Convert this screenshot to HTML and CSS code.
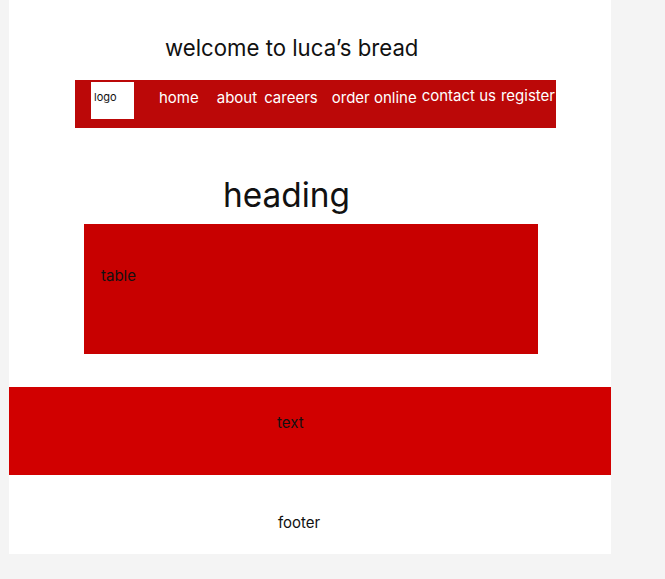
FILE: index.html
```html
<!DOCTYPE html>
<html>
<head>
<meta charset="utf-8">
<link rel="stylesheet" href="styles.css">
</head>
<body>
<div class="frame">
  <h1 class="title">welcome to luca’s bread</h1>
  <nav class="nav">
    <div class="logo">logo</div>
    <span class="item home">home</span>
    <span class="item about">about</span>
    <span class="item careers">careers</span>
    <span class="item order">order online</span>
    <span class="item contact up">contact us</span>
    <span class="item register up">register</span>
  </nav>
  <h2 class="heading">heading</h2>
  <div class="table"><span>table</span></div>
  <div class="band"><span>text</span></div>
  <div class="footer">footer</div>
</div>
</body>
</html>
```
FILE: styles.css
```css
html, body {
  margin: 0;
  padding: 0;
  background: #f4f4f4;
  font-family: Inter, "Liberation Sans", sans-serif;
  color: #111;
}
.frame {
  margin-left: 9px;
  width: 602px;
  height: 554px;
  background: #fff;
  overflow: hidden;
}
.title {
  margin: 0;
  padding: 34px 0 0 156px;
  font-size: 22.2px;
  font-weight: 400;
  line-height: 27px;
}
.nav {
  margin: 19px 0 0 66px;
  width: 481px;
  height: 48px;
  background: #bb0808;
  display: flex;
  align-items: flex-start;
  color: #fff;
  font-size: 15px;
}
.logo {
  margin: 2px 0 0 16px;
  width: 43px;
  height: 37px;
  background: #fff;
  color: #111;
  font-size: 11px;
  line-height: 13px;
  box-sizing: border-box;
  padding: 9px 0 0 3px;
}
.item {
  line-height: 18px;
  margin-top: 9px;
  white-space: nowrap;
}
.item.up { margin-top: 7px; }
.home { margin-left: 25px; }
.about { margin-left: 18px; }
.careers { margin-left: 7px; }
.order { margin-left: 14px; }
.contact { margin-left: 5px; }
.register { margin-left: 5px; }
.heading {
  margin: 0;
  padding: 47px 0 0 214px;
  font-size: 33.4px;
  font-weight: 400;
  line-height: 40px;
}
.table {
  margin: 9px 0 0 75px;
  width: 454px;
  height: 130px;
  background: #c80000;
  box-sizing: border-box;
  padding: 43px 0 0 17px;
  font-size: 15px;
  line-height: 18px;
}
.band {
  margin-top: 33px;
  height: 88px;
  background: #d10000;
  box-sizing: border-box;
  padding: 27px 0 0 268px;
  font-size: 15px;
  line-height: 18px;
}
.footer {
  padding: 39px 0 0 269px;
  font-size: 15px;
  line-height: 18px;
}
```
